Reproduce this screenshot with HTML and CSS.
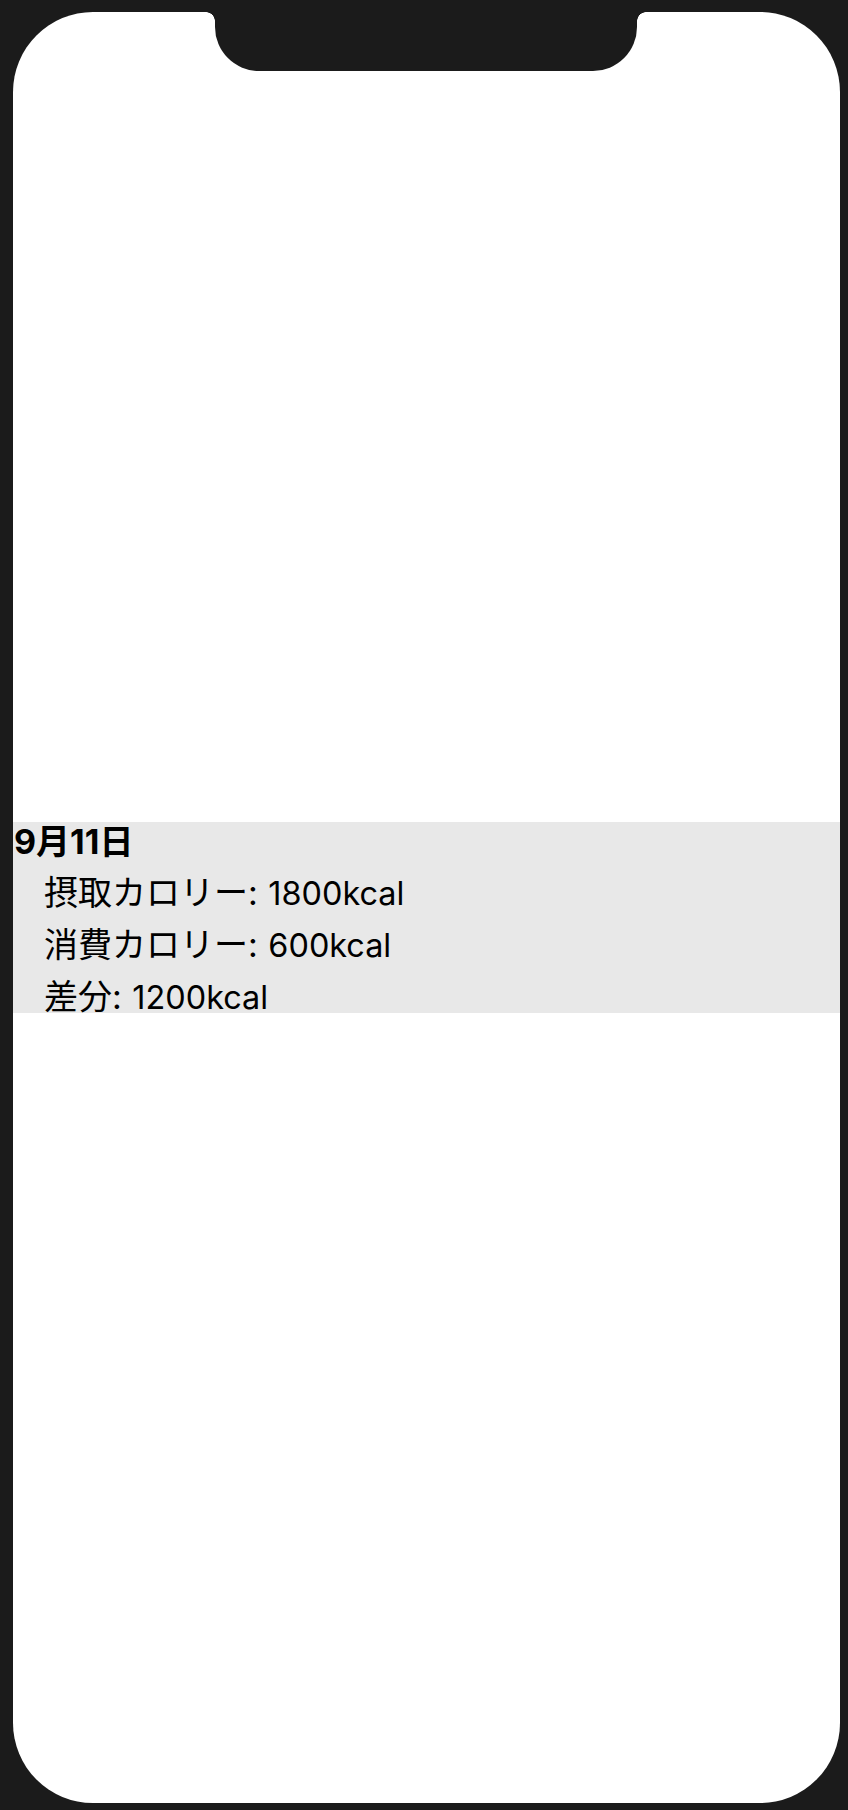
FILE: index.html
```html
<!DOCTYPE html>
<html lang="ja">
<head>
<meta charset="utf-8">
<title>カロリー記録</title>
<link rel="stylesheet" href="styles.css">
</head>
<body>
<div class="device">
  <div class="screen">
    <div class="notch"></div>
    <section class="day">
      <div class="day-title">9月11日</div>
      <div class="day-row">摂取カロリー: <span class="val">1800kcal</span></div>
      <div class="day-row">消費カロリー: <span class="val">600kcal</span></div>
      <div class="day-row">差分: <span class="val">1200kcal</span></div>
    </section>
  </div>
</div>
</body>
</html>
```
FILE: styles.css
```css
html, body {
  margin: 0;
  padding: 0;
  background: #1b1b1b;
}

.device {
  width: 848px;
  height: 1810px;
  padding: 12px 8px 7px 13px;
  box-sizing: border-box;
  background: #1b1b1b;
}

.screen {
  position: relative;
  width: 827px;
  height: 1791px;
  background: #ffffff;
  border-radius: 80px;
  overflow: hidden;
  display: flex;
  flex-direction: column;
}

.notch {
  position: absolute;
  left: 202px;
  top: 0;
  width: 422px;
  height: 59px;
  background: #1b1b1b;
  border-radius: 0 0 44px 44px;
}

.notch::before,
.notch::after {
  content: "";
  position: absolute;
  top: 0;
  width: 9px;
  height: 9px;
}

.notch::before {
  left: -9px;
  background: radial-gradient(circle at 0 100%, transparent 8.5px, #1b1b1b 9px);
}

.notch::after {
  right: -9px;
  background: radial-gradient(circle at 100% 100%, transparent 8.5px, #1b1b1b 9px);
}

.day {
  margin-top: 810px;
  background: #e8e8e8;
  height: 191px;
  display: flex;
  flex-direction: column;
  gap: 11px;
  font-family: Inter, "Noto Sans CJK JP", sans-serif;
  font-size: 34px;
  color: #000;
}

.day-title {
  line-height: 40px;
  font-weight: 700;
  padding-left: 1px;
}

.day-row {
  line-height: 40px;
  padding-left: 31px;
}

.val {
  font-size: 32.4px;
  padding-left: 1px;
}
```
